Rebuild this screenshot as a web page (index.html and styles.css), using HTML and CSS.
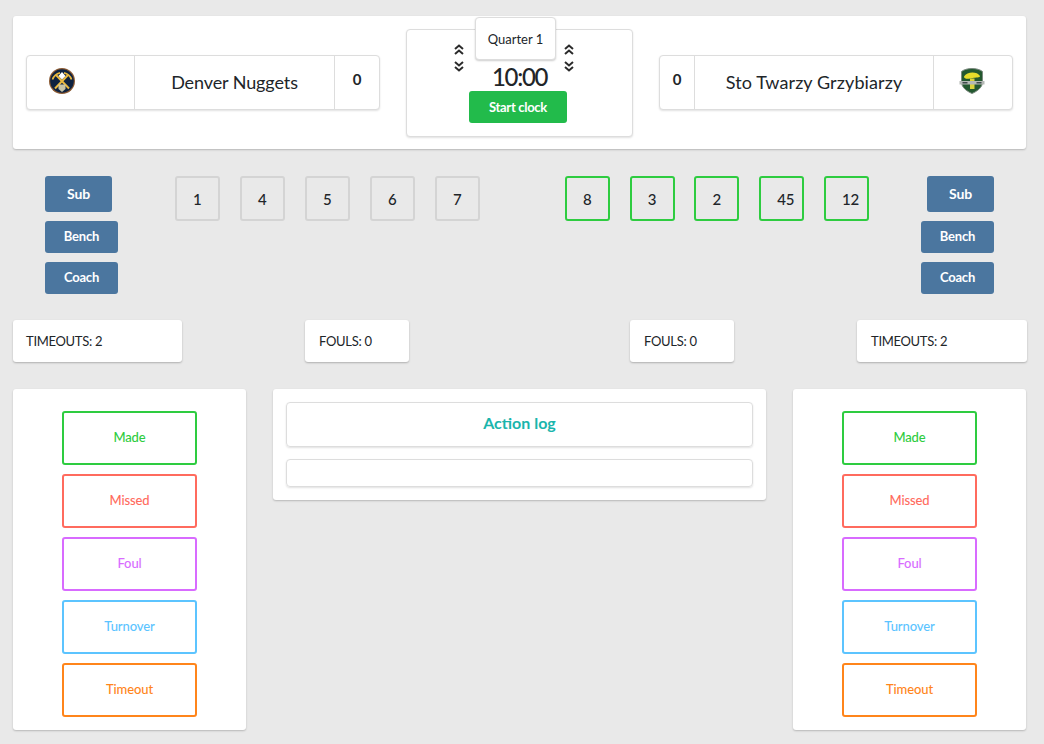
FILE: index.html
```html
<!DOCTYPE html>
<html lang="en">
<head>
  <meta charset="UTF-8" />
  <meta name="viewport" content="width=device-width, initial-scale=1.0">
  <title>Game scoreboard</title>
  <link rel="stylesheet" href="styles.css">
</head>
<body>
  <svg class="defs" width="0" height="0">
    <symbol id="double-up" viewBox="0 0 10 11">
      <path d="M1 5 5 1.500 9 5M1 10 5 6.500 9 10" fill="none" stroke="#2b2b2b" stroke-width="2"/>
    </symbol>
    <symbol id="double-down" viewBox="0 0 10 11">
      <path d="M1 1 5 4.500 9 1M1 6 5 9.500 9 6" fill="none" stroke="#2b2b2b" stroke-width="2"/>
    </symbol>
  </svg>

  <div class="scoreboard">
    <div class="team">
      <div class="team-logo team-logo-left">
        <svg width="26" height="26" viewBox="0 0 26 26">
          <circle cx="13" cy="13" r="13" fill="#8a5a33"/>
          <circle cx="13" cy="13" r="11.800" fill="#0e2240"/>
          <path d="M7 7 20 20.500M19 7 6 20.500" stroke="#eab93f" stroke-width="2" fill="none"/>
          <path d="M3.500 11.500C5 7.500 7.500 5.500 11 4.800M22.500 11.500C21 7.500 18.500 5.500 15 4.800" stroke="#eab93f" stroke-width="1.700" fill="none"/>
          <path d="M13 4 16.500 8 13 11.500 9.500 8z" fill="#fff"/>
          <path d="M9.500 16.500h7V21L13 24l-3.500-3z" fill="#c7c3a6"/>
        </svg>
      </div>
      <div class="team-name team-name-left">Denver Nuggets</div>
      <div class="team-score team-score-left">0</div>
    </div>

    <div class="clock">
      <div class="quarter">Quarter 1</div>
      <div class="clock-row">
        <div class="arrows">
          <svg width="10" height="11"><use href="#double-up"/></svg>
          <svg width="10" height="11"><use href="#double-down"/></svg>
        </div>
        <div class="clock-time">10:00</div>
        <div class="arrows">
          <svg width="10" height="11"><use href="#double-up"/></svg>
          <svg width="10" height="11"><use href="#double-down"/></svg>
        </div>
      </div>
      <button type="button" class="start-btn">Start clock</button>
    </div>

    <div class="team">
      <div class="team-score team-score-right">0</div>
      <div class="team-name team-name-right">Sto Twarzy Grzybiarzy</div>
      <div class="team-logo team-logo-right">
        <svg width="26" height="26" viewBox="0 0 26 26">
          <path d="M13 .5C17 .5 21 1.500 23.500 3.500V14c0 5-4.500 9-10.500 11.500C7 23 2.500 19 2.500 14V3.500C5 1.500 9 .5 13 .5z" fill="#23582f" stroke="#7d8a80" stroke-width="1"/>
          <path d="M5 8.500C8 3.500 18 3 21 8c.5 1.800-5 1.500-7 2-3 .8-9 2-9-1.500z" fill="#e6dc2a"/>
          <path d="M11 10.500h4.500V21H11z" fill="#d9d23a"/>
          <path d="M.5 13h25v3.500H.5z" fill="#b4b9b5"/>
          <path d="M3.500 14h5v1.500h-5zM17.500 14h5v1.500h-5z" fill="#3f4a4b"/>
        </svg>
      </div>
    </div>
  </div>

  <div class="lineup">
    <div class="side-btns">
      <button type="button" class="side-btn side-btn-sub">Sub</button>
      <button type="button" class="side-btn">Bench</button>
      <button type="button" class="side-btn">Coach</button>
    </div>
    <div class="players players-home">
      <div class="player">1</div>
      <div class="player">4</div>
      <div class="player">5</div>
      <div class="player">6</div>
      <div class="player">7</div>
    </div>
    <div class="players players-away">
      <div class="player player-on">8</div>
      <div class="player player-on">3</div>
      <div class="player player-on">2</div>
      <div class="player player-on">45</div>
      <div class="player player-on">12</div>
    </div>
    <div class="side-btns side-btns-right">
      <button type="button" class="side-btn side-btn-sub">Sub</button>
      <button type="button" class="side-btn">Bench</button>
      <button type="button" class="side-btn">Coach</button>
    </div>
  </div>

  <div class="stats">
    <div class="stat stat-timeouts">TIMEOUTS: 2</div>
    <div class="stat stat-fouls stat-fouls-home">FOULS: 0</div>
    <div class="stat stat-fouls stat-fouls-away">FOULS: 0</div>
    <div class="stat stat-timeouts stat-timeouts-away">TIMEOUTS: 2</div>
  </div>

  <div class="bottom">
    <div class="actions">
      <button type="button" class="action action-made">Made</button>
      <button type="button" class="action action-missed">Missed</button>
      <button type="button" class="action action-foul">Foul</button>
      <button type="button" class="action action-turnover">Turnover</button>
      <button type="button" class="action action-timeout">Timeout</button>
    </div>

    <div class="log">
      <div class="log-title">Action log</div>
      <div class="log-list"></div>
    </div>

    <div class="actions">
      <button type="button" class="action action-made">Made</button>
      <button type="button" class="action action-missed">Missed</button>
      <button type="button" class="action action-foul">Foul</button>
      <button type="button" class="action action-turnover">Turnover</button>
      <button type="button" class="action action-timeout">Timeout</button>
    </div>
  </div>
</body>
</html>
```

FILE: styles.css
```css
html, body {
  height: 100%;
}
body {
  margin: 0;
  padding: 16px 18px 0 13px;
  box-sizing: border-box;
  background-color: #e9e9e9;
  font-family: Lato, "Open Sans", sans-serif;
  font-size: 14px;
  color: #212529;
  overflow: hidden;
}
button {
  font-family: inherit;
  cursor: pointer;
}
.defs {
  position: absolute;
}

/* top card */
.scoreboard {
  height: 133px;
  box-sizing: border-box;
  padding: 0 13px;
  display: flex;
  align-items: flex-start;
  justify-content: space-between;
  background: white;
  border-radius: 3px;
  box-shadow: 0 1px 2px rgba(0, 0, 0, 0.22);
}
.team {
  width: 354px;
  height: 55px;
  margin-top: 39px;
  box-sizing: border-box;
  display: flex;
  background: white;
  border: 1px solid #ddd;
  border-radius: 4px;
  box-shadow: 0 1px 2px rgba(0, 0, 0, 0.12);
}
.team-logo {
  display: flex;
  align-items: center;
  justify-content: center;
  box-sizing: border-box;
}
.team-logo-left {
  width: 108px;
  padding: 0 0 3px 22px;
  border-right: 1px solid #ddd;
  justify-content: flex-start;
}
.team-logo-right {
  flex: 1;
  border-left: 1px solid #ddd;
  padding: 0 3px 3px 0;
}
.team-name {
  display: flex;
  align-items: center;
  justify-content: center;
  font-size: 18px;
  padding-bottom: 2px;
  box-sizing: border-box;
}
.team-name-left {
  width: 199px;
  letter-spacing: -0.1px;
}
.team-name-right {
  width: 238px;
  letter-spacing: 0.1px;
}
.team-score {
  display: flex;
  justify-content: center;
  padding-top: 14px;
  box-sizing: border-box;
  font-size: 15px;
  font-weight: 700;
}
.team-score-left {
  flex: 1;
  border-left: 1px solid #ddd;
}
.team-score-right {
  width: 35px;
  border-right: 1px solid #ddd;
}

/* clock */
.clock {
  position: relative;
  width: 227px;
  height: 108px;
  margin-top: 13px;
  box-sizing: border-box;
  padding-top: 14px;
  display: flex;
  flex-direction: column;
  align-items: center;
  background: white;
  border: 1px solid #ddd;
  border-radius: 4px;
  box-shadow: 0 1px 2px rgba(0, 0, 0, 0.12);
}
.quarter {
  position: absolute;
  top: -13px;
  left: 68px;
  width: 81px;
  height: 43px;
  box-sizing: border-box;
  display: flex;
  align-items: center;
  justify-content: center;
  background: white;
  border: 1px solid #ddd;
  border-radius: 4px;
  box-shadow: 0 1px 2px rgba(0, 0, 0, 0.2);
  font-size: 13px;
  white-space: nowrap;
}
.clock-row {
  height: 47px;
  margin-right: 11px;
  display: flex;
}
.arrows {
  display: flex;
  flex-direction: column;
  gap: 6px;
}
.arrows svg {
  display: block;
}
.clock-time {
  width: 54px;
  margin: 18px 18px 0 28px;
  font-size: 24px;
  font-weight: 500;
  line-height: 29px;
  letter-spacing: -1.300px;
  white-space: nowrap;
}
.start-btn {
  width: 98px;
  height: 32px;
  margin-right: 3px;
  padding: 0;
  background: #22bb4b;
  color: white;
  border: none;
  border-radius: 3px;
  font-size: 13px;
  font-weight: 700;
  letter-spacing: -0.3px;
}

/* players row */
.lineup {
  margin: 27px 0 0 32px;
  display: flex;
  align-items: flex-start;
}
.side-btns {
  width: 73px;
  display: flex;
  flex-direction: column;
  align-items: flex-start;
  gap: 9px;
}
.side-btns-right {
  margin-left: 52.100px;
  align-items: flex-end;
}
.side-btn {
  width: 73px;
  height: 32px;
  padding: 0 0 2px;
  background: #4b769f;
  color: white;
  border: none;
  border-radius: 3px;
  font-size: 13px;
  font-weight: 700;
  letter-spacing: -0.2px;
}
.side-btn-sub {
  width: 67px;
  height: 36px;
  font-size: 14px;
}
.players {
  display: flex;
  gap: 20px;
}
.players-home {
  margin-left: 57px;
}
.players-away {
  margin-left: 84.900px;
  gap: 19.750px;
}
.player {
  width: 45px;
  height: 45px;
  box-sizing: border-box;
  padding-left: 16px;
  display: flex;
  align-items: center;
  border: 2px solid #d4d4d4;
  border-radius: 3px;
  font-size: 15px;
  font-weight: 500;
}
.player-on {
  border-color: #2ecc40;
}

/* timeouts and fouls */
.stats {
  margin-top: 26px;
  display: flex;
}
.stat {
  flex-shrink: 0;
  height: 42px;
  box-sizing: border-box;
  padding-left: 14px;
  display: flex;
  align-items: center;
  background: white;
  border-radius: 3px;
  box-shadow: 0 1px 2px rgba(0, 0, 0, 0.25);
  font-size: 13px;
  letter-spacing: -0.3px;
}
.stat-timeouts {
  width: 169px;
  padding-left: 13px;
}
.stat-timeouts-away {
  width: 170px;
  padding-left: 14px;
}
.stat-fouls {
  width: 104px;
}
.stat-fouls-home {
  margin-left: 123px;
}
.stat-fouls-away {
  margin: 0 123px 0 221px;
}

/* bottom panels */
.bottom {
  margin-top: 27px;
  display: flex;
  justify-content: space-between;
  align-items: flex-start;
}
.actions {
  width: 233px;
  height: 341px;
  box-sizing: border-box;
  padding-top: 22px;
  display: flex;
  flex-direction: column;
  align-items: center;
  gap: 9px;
  background: white;
  border-radius: 3px;
  box-shadow: 0 1px 2px rgba(0, 0, 0, 0.22);
}
.action {
  width: 135px;
  height: 54px;
  padding: 0 0 2px;
  background: white;
  border: 2px solid;
  border-radius: 3px;
  font-size: 13px;
  font-weight: 500;
  letter-spacing: -0.1px;
}
.action-made {
  color: #2ecc40;
}
.action-missed {
  color: #ff6b5e;
}
.action-foul {
  color: #d86bff;
}
.action-turnover {
  color: #5cc4ff;
}
.action-timeout {
  color: #ff851b;
}
.log {
  width: 493px;
  height: 111px;
  box-sizing: border-box;
  padding: 13px;
  background: white;
  border-radius: 3px;
  box-shadow: 0 1px 2px rgba(0, 0, 0, 0.22);
}
.log-title {
  height: 45px;
  box-sizing: border-box;
  padding-bottom: 5px;
  display: flex;
  align-items: center;
  justify-content: center;
  border: 1px solid #ddd;
  border-radius: 4px;
  box-shadow: 0 1px 2px rgba(0, 0, 0, 0.12);
  color: #1ab5ac;
  font-size: 16px;
  font-weight: 700;
}
.log-list {
  height: 28px;
  margin-top: 12px;
  box-sizing: border-box;
  border: 1px solid #ddd;
  border-radius: 4px;
  box-shadow: 0 1px 2px rgba(0, 0, 0, 0.12);
}
```
